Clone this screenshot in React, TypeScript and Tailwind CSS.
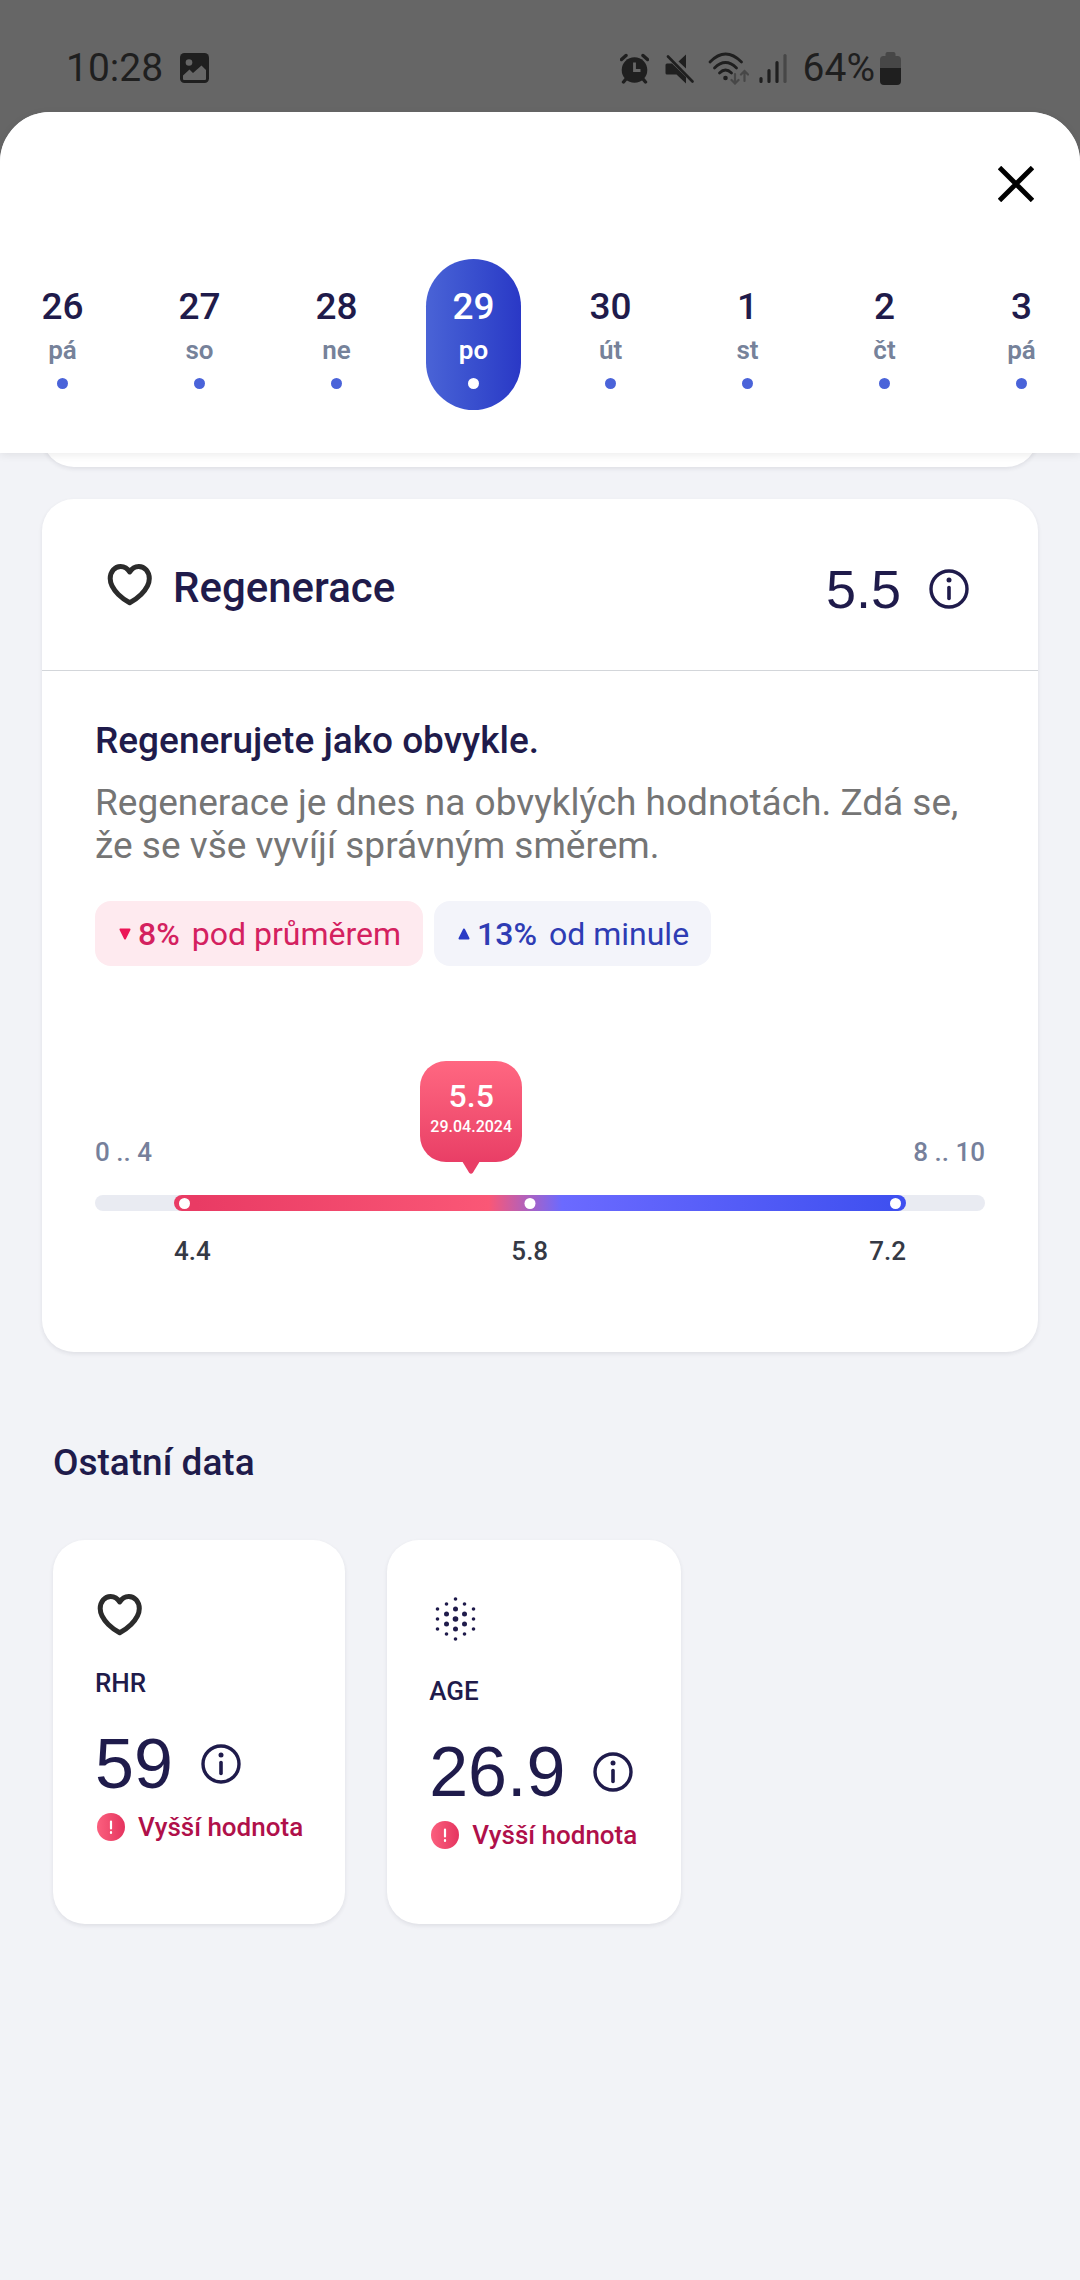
import type { ReactNode } from "react";

const DAYS = [
  { date: "26", weekday: "pá" },
  { date: "27", weekday: "so" },
  { date: "28", weekday: "ne" },
  { date: "29", weekday: "po", selected: true },
  { date: "30", weekday: "út" },
  { date: "1", weekday: "st" },
  { date: "2", weekday: "čt" },
  { date: "3", weekday: "pá" },
];

// position of the values on the coloured range, in percent
const AVERAGE = { label: "5.8", position: 48.6 };
const TODAY = { label: "5.5", date: "29.04.2024", position: 40.6 };

// column x, then the dots in it as [y, radius]
const DOT_COLUMNS = [
  { x: 8.5, dots: [[18, 1.8], [28, 1.8], [38, 1.8]] },
  { x: 17.5, dots: [[13, 1.8], [23, 2.5], [33, 2.5], [43, 1.8]] },
  { x: 26.5, dots: [[8, 1.8], [18, 2.5], [28, 2.8], [38, 2.5], [48, 1.8]] },
  { x: 35.5, dots: [[13, 1.8], [23, 2.5], [33, 2.5], [43, 1.8]] },
  { x: 44.5, dots: [[18, 1.8], [28, 1.8], [38, 1.8]] },
];

function HeartIcon() {
  return (
    <svg viewBox="0 0 48 48" className="h-12 w-12" aria-hidden="true">
      <path
        d="M24.7 41.8C20.5 39.6 5.2 29.8 5.2 17.6C5.2 10.4 9.8 5.4 15.6 5.4C19.4 5.4 22.6 7.4 24.7 11C26.8 7.4 30 5.4 33.8 5.4C39.6 5.4 44.3 10.4 44.3 17.6C44.3 29.8 28.9 39.6 24.7 41.8Z"
        fill="none"
        stroke="#2b2b2b"
        strokeWidth="5"
        strokeLinejoin="round"
      />
    </svg>
  );
}

function DotsIcon() {
  return (
    <svg viewBox="0 0 56 56" className="h-14 w-14" fill="#1f1b4b" aria-hidden="true">
      {DOT_COLUMNS.map(column =>
        column.dots.map(([y, r]) => <circle key={`${column.x}-${y}`} cx={column.x} cy={y} r={r} />),
      )}
    </svg>
  );
}

function InfoButton() {
  return (
    <button type="button" aria-label="Informace">
      <svg viewBox="0 0 40 40" className="h-10 w-10" aria-hidden="true">
        <circle cx="20" cy="20" r="18" fill="none" stroke="#1f1b4b" strokeWidth="3.4" />
        <circle cx="20" cy="11" r="2.5" fill="#1f1b4b" />
        <path d="M20 18.5V29.5" stroke="#1f1b4b" strokeWidth="3.6" strokeLinecap="round" />
      </svg>
    </button>
  );
}

function StatusBar() {
  return (
    <div className="flex h-28 items-center justify-between pt-6 pr-[179px] pl-[66px] text-[39px] leading-none text-[#1f1f1f]">
      <div className="flex items-center gap-[17px]">
        <span>10:28</span>
        <svg viewBox="0 0 29 30" className="h-[30px] w-[29px]" aria-hidden="true">
          <rect width="29" height="30" rx="4.5" fill="#1f1f1f" />
          <circle cx="9" cy="9.5" r="3.3" fill="#666" />
          <path d="M3 22.5L9.5 16.5L13 20L21.5 12.5L26 17V26Q26 27 25 27H4Q3 27 3 26Z" fill="#666" />
        </svg>
      </div>

      <div className="flex items-center">
        <svg viewBox="0 0 29 31" className="mr-4 h-[31px] w-[29px]" aria-hidden="true">
          <circle cx="14.5" cy="17" r="12.8" fill="#1f1f1f" />
          <path d="M1.5 6.5L6 2.5M27.5 6.5L23 2.5M6 26L3.5 29M23 26L25.5 29" stroke="#1f1f1f" strokeWidth="3.4" strokeLinecap="round" />
          <path d="M14.5 9.5V17.5H20.5" fill="none" stroke="#666" strokeWidth="2.8" />
        </svg>
        <svg viewBox="0 0 29 31" className="mr-3.5 h-[31px] w-[29px]" aria-hidden="true">
          <path d="M0.5 12Q0.5 10.5 2 10.5H7L21 24V30.5L11.5 21.5H2Q0.5 21.5 0.5 20Z" fill="#1f1f1f" />
          <path d="M13.5 8.5L21 1.5V15.5Z" fill="#1f1f1f" />
          <path d="M3 3.5L27.5 28.5" stroke="#1f1f1f" strokeWidth="2.6" strokeLinecap="round" />
        </svg>
        <svg viewBox="0 0 41 33" className="mr-2.5 h-[33px] w-[41px]" fill="none" strokeLinecap="round" aria-hidden="true">
          <path d="M2 10Q17.5 -6 33.5 10M6.5 16Q17.5 5 28.5 16M11.5 21Q17.5 15 23.5 21" stroke="#1f1f1f" strokeWidth="2.8" />
          <circle cx="17.5" cy="26" r="2.3" fill="#1f1f1f" />
          <path d="M27 22V31M23.5 28L27 31.5L30.5 28M36.5 29V20M33 22.5L36.5 19L40 22.5" stroke="#474747" strokeWidth="2.2" />
        </svg>
        <svg viewBox="0 0 28 31" className="mr-4 h-[31px] w-7" strokeWidth="3.2" strokeLinecap="round" aria-hidden="true">
          <path d="M2 25.5V28.5M10 17.5V28.5M18 9.5V28.5" stroke="#1f1f1f" />
          <path d="M26 2.5V28.5" stroke="#474747" />
        </svg>
        <span className="mr-[5px]">64%</span>
        <svg viewBox="0 0 21 34" className="h-[34px] w-[21px]" aria-hidden="true">
          <path d="M5.5 5V3Q5.5 1 7.5 1H13.5Q15.5 1 15.5 3V5H17.5Q21 5 21 9V17H0V9Q0 5 3.5 5Z" fill="#474747" />
          <path d="M0 17H21V30Q21 34 17 34H4Q0 34 0 30Z" fill="#1f1f1f" />
        </svg>
      </div>
    </div>
  );
}

function DayStrip() {
  return (
    <div className="overflow-hidden">
      <div className="-mr-[10px] -ml-[6px] grid grid-cols-8 justify-items-center">
        {DAYS.map(day => (
          <button
            key={day.date}
            type="button"
            className={
              day.selected
                ? "flex h-[151px] w-[95px] flex-col items-center rounded-full bg-linear-to-r from-[#4a63d6] to-[#2a38c6] pt-[26px] text-white"
                : "flex h-[151px] w-[95px] flex-col items-center pt-[26px] text-[#1f1b4b]"
            }
          >
            <span className="text-[37px] leading-[44px] font-medium">{day.date}</span>
            <span
              className={
                day.selected
                  ? "mt-1.5 text-[26px] leading-[30px] font-semibold"
                  : "mt-1.5 text-[26px] leading-[30px] font-semibold text-[#76829a]"
              }
            >
              {day.weekday}
            </span>
            <span className={day.selected ? "mt-[13px] h-[11px] w-[11px] rounded-full bg-white" : "mt-[13px] h-[11px] w-[11px] rounded-full bg-[#4a63d9]"} />
          </button>
        ))}
      </div>
    </div>
  );
}

function RangeScale() {
  return (
    <div className="mt-[171px] font-medium">
      <div className="flex justify-between text-[26px] leading-[30px] text-[#76809b]">
        <span>0 .. 4</span>
        <span>8 .. 10</span>
      </div>

      <div className="mt-7 rounded-full bg-[#e9ebf2] px-[79px]">
        <div className="relative flex h-4 items-center justify-between rounded-full bg-[linear-gradient(90deg,#e93b64_3%,#fa5776_43%,#6b6aff_53%,#3f50f0_98%)] px-[5px]">
          <span className="h-[11px] w-[11px] rounded-full bg-white" />
          <span className="h-[11px] w-[11px] rounded-full bg-white" />
          <span
            className="absolute h-[11px] w-[11px] -translate-x-1/2 rounded-full bg-white"
            style={{ left: `${AVERAGE.position}%` }}
          />
          <div
            className="absolute bottom-[37px] flex -translate-x-1/2 flex-col items-center text-white"
            style={{ left: `${TODAY.position}%` }}
          >
            <div className="flex h-[101px] w-[102px] flex-col items-center rounded-[26px] bg-linear-to-b from-[#ff6781] to-[#e93e66] pt-4">
              <span className="text-[32px] leading-[38px]">{TODAY.label}</span>
              <span className="mt-0.5 text-base leading-5">{TODAY.date}</span>
            </div>
            <svg viewBox="0 0 18 13" className="-mt-px h-[13px] w-[18px]" aria-hidden="true">
              <path d="M0 0H18L11 11.5Q9 14 7 11.5Z" fill="#e93e66" />
            </svg>
          </div>
        </div>
      </div>

      <div className="px-[79px]">
        <div className="relative mt-[25px] flex justify-between text-[26px] leading-[30px] text-[#353945]">
          <span>4.4</span>
          <span className="absolute -translate-x-1/2" style={{ left: `${AVERAGE.position}%` }}>
            {AVERAGE.label}
          </span>
          <span>7.2</span>
        </div>
      </div>
    </div>
  );
}

function RegenerationCard() {
  return (
    <article className="mx-[42px] mt-8 rounded-[32px] bg-white shadow-[0_2px_4px_rgba(30,30,60,0.09)]">
      <header className="flex h-[172px] items-center justify-between border-b border-[#d3d6da] pr-[69px] pl-[63px]">
        <div className="flex items-center gap-5">
          <HeartIcon />
          <h2 className="pt-1.5 text-[42px] leading-[50px] font-medium">Regenerace</h2>
        </div>
        <div className="flex items-center gap-7 pt-2">
          <span className="font-['Liberation_Sans',sans-serif] text-[54px] leading-[60px]">5.5</span>
          <InfoButton />
        </div>
      </header>

      <div className="px-[53px] pt-12 pb-[86px]">
        <h3 className="text-[37px] leading-[44px] font-medium">Regenerujete jako obvykle.</h3>
        <p className="mt-[18px] text-[37px] leading-[43px] text-[#757575]">
          Regenerace je dnes na obvyklých hodnotách. Zdá se, že se vše vyvíjí správným směrem.
        </p>

        <div className="mt-[34px] flex gap-[11px] text-[32px]">
          <div className="flex h-[65px] items-center rounded-2xl bg-[#feeaef] pr-[22px] pl-6 text-[#d4215f]">
            <svg viewBox="0 0 12 12" className="mr-[7px] h-3 w-3" aria-hidden="true">
              <path d="M1.5 1.5H10.5L6 10.5Z" fill="#ec1657" stroke="#ec1657" strokeWidth="2" strokeLinejoin="round" />
            </svg>
            <span className="mr-3 font-medium">8%</span>
            pod průměrem
          </div>
          <div className="flex h-[65px] items-center rounded-2xl bg-[#f3f4fa] pr-[22px] pl-6 text-[#2e3cb4]">
            <svg viewBox="0 0 12 12" className="mr-[7px] h-3 w-3" aria-hidden="true">
              <path d="M1.5 10.5H10.5L6 1.5Z" fill="#2a3bc6" stroke="#2a3bc6" strokeWidth="2" strokeLinejoin="round" />
            </svg>
            <span className="mr-3 font-medium">13%</span>
            od minule
          </div>
        </div>

        <RangeScale />
      </div>
    </article>
  );
}

function MetricCard({ icon, label, value }: { icon: ReactNode; label: string; value: string }) {
  return (
    <article className="rounded-[32px] bg-white px-[42px] pt-[51px] pb-[74px] font-medium shadow-[0_2px_4px_rgba(30,30,60,0.09)]">
      {icon}
      <h3 className="mt-[29px] text-[26px] leading-[30px]">{label}</h3>
      <div className="mt-7 flex items-center gap-7 pr-1.5">
        <span className="font-['Liberation_Sans',sans-serif] text-[70px] leading-[76px] font-normal">{value}</span>
        <InfoButton />
      </div>
      <p className="mt-2.5 flex items-center gap-[13px] text-[26px] leading-[30px] text-[#b0104a]">
        <span className="ml-0.5 flex h-7 w-7 items-center justify-center rounded-full bg-linear-to-r from-[#fb5f7e] to-[#e5335f]">
          <svg viewBox="0 0 28 28" className="h-7 w-7" aria-hidden="true">
            <path d="M14 8.5V15.5M14 19V20" stroke="#fff" strokeWidth="2.2" strokeLinecap="round" />
          </svg>
        </span>
        Vyšší hodnota
      </p>
    </article>
  );
}

export default function App() {
  return (
    <div className="flex min-h-screen flex-col bg-[#666] font-[Roboto,sans-serif] text-[#1f1b4b]">
      <StatusBar />

      <main className="flex-1 rounded-t-[50px] bg-[#f2f3f7] pb-16">
        <header className="relative z-10 rounded-t-[50px] bg-white pb-[43px] shadow-[0_2px_8px_rgba(0,0,0,0.08)]">
          <div className="flex justify-end pt-[54px] pr-[46px] pb-[57px]">
            <button type="button" aria-label="Zavřít">
              <svg viewBox="0 0 36 36" className="h-9 w-9" aria-hidden="true">
                <path d="M1.5 1.5L34.5 34.5M34.5 1.5L1.5 34.5" stroke="#000" strokeWidth="4.8" />
              </svg>
            </button>
          </div>
          <DayStrip />
        </header>

        {/* end of the card that is scrolled under the header */}
        <div className="mx-[42px] -mt-[50px] h-16 rounded-b-[32px] bg-white shadow-[0_2px_4px_rgba(30,30,60,0.09)]" />

        <RegenerationCard />

        <section className="px-[53px] pt-[89px]">
          <h2 className="text-[37px] leading-[44px] font-medium">Ostatní data</h2>
          <div className="mt-[55px] flex gap-[42px]">
            <MetricCard icon={<HeartIcon />} label="RHR" value="59" />
            <MetricCard icon={<DotsIcon />} label="AGE" value="26.9" />
          </div>
        </section>
      </main>
    </div>
  );
}
